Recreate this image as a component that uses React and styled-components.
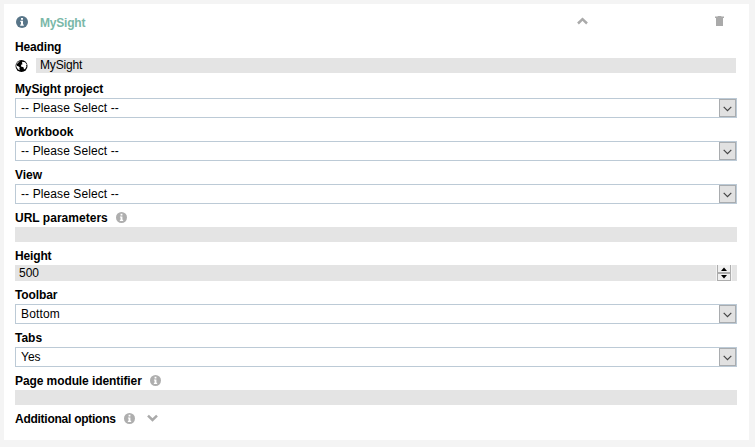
import React from 'react';
import styled, { createGlobalStyle } from 'styled-components';

const GlobalStyle = createGlobalStyle`
  * {
    box-sizing: border-box;
  }

  body {
    margin: 0;
    background: #f4f4f4;
    color: #000;
    font-family: 'Liberation Sans', Arial, sans-serif;
    font-size: 12px;
  }
`;

const Panel = styled.section`
  width: 745px;
  height: 436px;
  margin: 4px;
  padding: 0 12px 0 11px;
  background: #fff;
`;

const Header = styled.header`
  display: flex;
  align-items: center;
  height: 31px;
  padding: 5px 13px 0 1px;

  svg {
    display: block;
  }
`;

const Title = styled.h2`
  flex: 1;
  margin: 2px 0 0 12px;
  color: #7ab8a8;
  font-size: 12px;
  font-weight: 700;
  line-height: 18px;
  letter-spacing: -0.2px;
`;

const HeaderButton = styled.button`
  display: flex;
  margin: ${(props) => props.$margin || '0'};
  padding: 0;
  border: none;
  background: none;
`;

const Label = styled.label`
  display: flex;
  align-items: center;
  height: 23px;
  padding: ${(props) => (props.$raised ? '3px 0 2px' : '5px 0 0')};
  font-weight: 700;
  line-height: 18px;
  letter-spacing: ${(props) => props.$spacing || '0'};

  svg {
    margin: 0 4px 2px 8px;
  }
`;

const HeadingRow = styled.div`
  display: flex;
  align-items: center;
  gap: 8px;
  height: 17px;
  padding: 0 1px 2px 0;
  letter-spacing: -0.15px;

  svg {
    margin-top: 1px;
  }
`;

const Input = styled.div`
  flex: 1;
  height: 15px;
  padding: 0 4px;
  background: #e4e4e4;
  line-height: 15px;
`;

const NumberInput = styled.div`
  display: flex;
  justify-content: space-between;
  height: 16px;
  padding: 0 5px 0 4px;
  background: #e4e4e4;
  line-height: 16px;
`;

const Spinner = styled.div`
  width: 16px;
  height: 16px;
  background: #f0f0f0;
  border: solid #f4f4f4;
  border-width: 0 1px;
`;

const SpinButton = styled.div`
  display: flex;
  align-items: center;
  justify-content: center;
  height: 8px;
  border: 1px solid #acacac;
  border-top-width: ${(props) => (props.$up ? '0' : '1px')};
`;

const Select = styled.div`
  display: flex;
  justify-content: space-between;
  height: 20px;
  padding-left: 5px;
  border: 1px solid #bccad6;
  line-height: 18px;
`;

const SelectValue = styled.span`
  letter-spacing: ${(props) => props.$spacing || '0'};
`;

const DropButton = styled.div`
  display: flex;
  align-items: center;
  justify-content: center;
  width: 17px;
  height: 18px;
  border: 1px solid #a9acaf;
  background: #e1e1e1;

  svg {
    margin-top: 1px;
  }
`;

const InfoIcon = ({ size = 11, color = '#aeaeae' }) => (
  <svg width={size} height={size} viewBox="0 0 12 12">
    <circle cx="6" cy="6" r="6" fill={color} />
    <path d="M5 2h2v1.7H5zM4.3 4.8H7v3.7h.8v1.3H4.2V8.5H5V6h-.7z" fill="#fff" />
  </svg>
);

const GlobeIcon = () => (
  <svg width="13" height="12" viewBox="0 0 13 12">
    <circle cx="6.5" cy="6" r="6" fill="#000" />
    <path
      d="M5 1.2 3.4 2.5 1.5 4.6l.2 1.2 1.6.4 1.5 1.4-.5 1.2.6 1.5-1.7-.9-1.5-2L1 5.3l.9-2.3 1.8-1.5zM7.2 1.8l2.9.5 1.8 2.4-.8.6.4 1.1-1.2 2.3-1.3.9-.5-2.4-2.5-.7.2-1.7 1.7-.9-.9-.5z"
      fill="#fff"
    />
  </svg>
);

const TrashIcon = () => (
  <svg width="9" height="10" viewBox="0 0 9 10">
    <path d="M0 .5h2.7V0h3.6v.5H9V2H0zM1 2h7v8H1z" fill="#aaa" />
  </svg>
);

const Chevron = ({ up }) => (
  <svg width="11" height="8" viewBox="0 0 11 8">
    <path
      d={up ? 'M1 6.5 5.5 2.2 10 6.5' : 'M1 1.7 5.5 6 10 1.7'}
      fill="none"
      stroke="#aaa"
      strokeWidth="2.5"
    />
  </svg>
);

const SelectField = ({ label, value, spacing, valueSpacing }) => (
  <>
    <Label $spacing={spacing}>{label}</Label>
    <Select>
      <SelectValue $spacing={valueSpacing}>{value}</SelectValue>
      <DropButton>
        <svg width="9" height="6" viewBox="0 0 9 6">
          <path d="M.7.8 4.5 4.6 8.3.8" fill="none" stroke="#444" strokeWidth="1.2" />
        </svg>
      </DropButton>
    </Select>
  </>
);

const App = () => {
  return (
    <>
      <GlobalStyle />
      <Panel>
        <Header>
          <InfoIcon size={12} color="#587588" />
          <Title>MySight</Title>
          <HeaderButton $margin="0 127px 2px 0"><Chevron up /></HeaderButton>
          <HeaderButton $margin="0 0 3px"><TrashIcon /></HeaderButton>
        </Header>
        <Label $raised $spacing="-0.15px">Heading</Label>
        <HeadingRow>
          <GlobeIcon />
          <Input>MySight</Input>
        </HeadingRow>
        <SelectField label="MySight project" spacing="-0.13px" value="-- Please Select --" valueSpacing="0.1px" />
        <SelectField label="Workbook" value="-- Please Select --" valueSpacing="0.1px" />
        <SelectField label="View" value="-- Please Select --" valueSpacing="0.1px" />
        <Label $spacing="0.02px">URL parameters <InfoIcon /></Label>
        <Input />
        <Label $spacing="-0.15px">Height</Label>
        <NumberInput>
          500
          <Spinner>
            <SpinButton $up>
              <svg width="6" height="4" viewBox="0 0 6 4"><path d="M0 4 3 .5 6 4z" /></svg>
            </SpinButton>
            <SpinButton>
              <svg width="6" height="4" viewBox="0 0 6 4"><path d="M0 0h6L3 3.5z" /></svg>
            </SpinButton>
          </Spinner>
        </NumberInput>
        <SelectField label="Toolbar" spacing="-0.12px" value="Bottom" valueSpacing="0.15px" />
        <SelectField label="Tabs" value="Yes" />
        <Label $spacing="-0.09px">Page module identifier <InfoIcon /></Label>
        <Input />
        <Label $spacing="-0.26px">Additional options <InfoIcon /> <Chevron /></Label>
      </Panel>
    </>
  );
};

export default App;
